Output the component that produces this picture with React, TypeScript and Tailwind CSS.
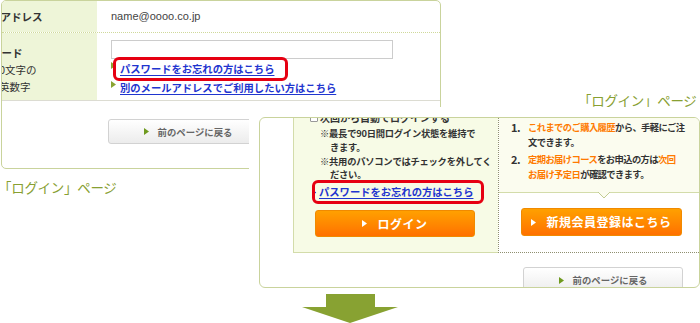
const jp = "font-['Noto_Sans_CJK_JP','Noto_Sans',sans-serif]";

function Tri({ className }: { className: string }) {
  return (
    <svg width="5" height="7" viewBox="0 0 5 7" className={className}>
      <path d="M0 0 L5 3.5 L0 7 Z" fill="currentColor" />
    </svg>
  );
}

function GrayButton({ className }: { className: string }) {
  return (
    <div
      className={`flex items-center justify-center gap-[9px] border border-[#d2d2d2] rounded-[3px] bg-gradient-to-b from-white to-[#ececec] ${className}`}
    >
      <Tri className="text-[#6f9a1f]" />
      <span className="text-[9.4px] leading-[12px] font-bold text-[#666]">前のページに戻る</span>
    </div>
  );
}

function OrangeButton({ label, className }: { label: string; className: string }) {
  return (
    <div
      className={`flex items-center justify-center gap-[10px] rounded-[3px] bg-gradient-to-b from-[#ffa000] to-[#ff7000] border border-[#f08a00] text-white ${className}`}
    >
      <Tri className="text-white" />
      <span className="text-[12px] leading-[16px] font-bold tracking-[0.5px]">{label}</span>
    </div>
  );
}

// link wrapped in the red annotation frame
function BoxedLink({ text, frame }: { text: string; frame: string }) {
  return (
    <span className="relative block text-[10.3px] leading-[14px] font-bold text-[#1f35cf] whitespace-nowrap">
      <span className="underline underline-offset-[2px]">{text}</span>
      <span className={`absolute border-[3px] border-[#e60012] rounded-[6px] ${frame}`} />
    </span>
  );
}

function OldLogin() {
  return (
    <div className="absolute left-[1px] top-0 w-[440px] h-[169px] border border-[#c9d39c] rounded-[5px] overflow-hidden bg-white text-[#333]">
      <div className="flex h-[32px] border-b border-dotted border-[#cfd99a]">
        <div className="w-[95px] bg-[#eef5d8] overflow-hidden flex items-center">
          <span className="ml-[-33px] text-[10.5px] leading-[14px] font-bold whitespace-nowrap">メールアドレス</span>
        </div>
        <div className="flex items-center pl-[14px] font-['Liberation_Sans',sans-serif] text-[11px] text-[#444]">
          name@oooo.co.jp
        </div>
      </div>
      <div className="flex h-[68px] border-b border-[#dcdcd2]">
        <div className="w-[95px] bg-[#eef5d8] overflow-hidden pt-[11px] text-[10.5px] leading-[17px] whitespace-nowrap">
          <div className="ml-[-32px] font-bold">パスワード</div>
          <div className="ml-[-25px]">4～20文字の</div>
          <div className="ml-[-24px]">半角英数字</div>
        </div>
        <div className="pl-[14px] pt-[7px]">
          <div className="w-[282px] h-[19px] border border-[#cccccc] bg-white" />
          <div className="flex items-center gap-[4px] mt-[3px] h-[14px]">
            <Tri className="text-[#8aa432] self-start" />
            <BoxedLink text="パスワードをお忘れの方はこちら" frame="-left-[7px] -top-[5px] -right-[14px] -bottom-[5px]" />
          </div>
          <div className="flex items-center gap-[4px] mt-[5px] h-[14px]">
            <Tri className="text-[#8aa432] self-start" />
            <span className="text-[10.3px] leading-[14px] font-bold text-[#1f35cf] underline underline-offset-[2px] whitespace-nowrap">
              別のメールアドレスでご利用したい方はこちら
            </span>
          </div>
        </div>
      </div>
      <div className="pl-[106px] pt-[18px]">
        <GrayButton className="w-[160px] h-[25px]" />
      </div>
    </div>
  );
}

function NewLogin() {
  return (
    <div className="absolute left-[249px] top-[107px] w-[451px] h-[185px] bg-white pl-[10px] pt-[10px]">
      <div className="w-[441px] h-[171px] border border-[#c9d39c] rounded-[6px] overflow-hidden bg-white text-[#333]">
        <div className="flex h-[135px]">
          <div className="w-[33px]" />
          <div className="w-[205px] bg-[#f7fbe6] border-l border-b border-[#d3dcaa] pl-[16px]">
            <div className="flex items-center gap-[2px] mt-[-7px] h-[14px]">
              <span className="w-[8px] h-[8px] border border-[#999] bg-white rounded-[1px]" />
              <span className="text-[10px] leading-[14px] font-bold whitespace-nowrap">次回から自動でログインする</span>
            </div>
            <div className="pl-[10px] mt-[2px] text-[9.3px] font-bold leading-[13.8px] whitespace-nowrap tracking-[-0.25px]">
              <div>※最長で90日間ログイン状態を維持で</div>
              <div className="pl-[10px]">きます。</div>
              <div>※共用のパソコンではチェックを外してく</div>
              <div className="pl-[10px]">ださい。</div>
            </div>
            <div className="flex items-center gap-[2px] mt-[3px] ml-[2px] h-[14px]">
              <Tri className="text-[#1f35cf] scale-75" />
              <BoxedLink text="パスワードをお忘れの方はこちら" frame="-left-[7px] -top-[5px] -right-[11px] -bottom-[5px]" />
            </div>
            <OrangeButton label="ログイン" className="ml-[5px] mt-[11px] w-[160px] h-[27px]" />
          </div>
          <div className="w-[201px] border-l border-b border-dotted border-[#8f8f70]">
            <div className="relative h-[75px] bg-[#fbfcef] border-b border-[#d3dcaa] pt-[2px]">
              <div className="pl-[12px] pr-[8px] text-[9.3px] font-bold leading-[14.5px] tracking-[-0.6px]">
                <div className="flex">
                  <span className="w-[17px] text-[11px] text-[#333]">1.</span>
                  <span>
                    <span className="text-[#ff7a00]">これまでのご購入履歴</span>から、手軽にご注
                    <br />
                    文できます。
                  </span>
                </div>
                <div className="flex mt-[3px]">
                  <span className="w-[17px] text-[11px] text-[#333]">2.</span>
                  <span>
                    <span className="text-[#ff7a00]">定期お届けコース</span>をお申込の方は
                    <span className="text-[#ff7a00]">次回</span>
                    <br />
                    <span className="text-[#ff7a00]">お届け予定日</span>が確認できます。
                  </span>
                </div>
              </div>
              <svg width="12" height="7" viewBox="0 0 12 7" className="absolute left-[99px] bottom-[-7px]">
                <path d="M0 0 L6 6 L12 0" fill="#fbfcef" stroke="#c2cc92" strokeWidth="1" />
              </svg>
            </div>
            <OrangeButton label="新規会員登録はこちら" className="ml-[22px] mt-[15px] w-[161px] h-[28px]" />
          </div>
        </div>
        <div className="pl-[263px] pt-[14px]">
          <GrayButton className="w-[160px] h-[26px]" />
        </div>
      </div>
    </div>
  );
}

export default function App() {
  return (
    <div className={`relative w-[700px] h-[323px] overflow-hidden bg-white ${jp}`}>
      <OldLogin />
      <div className="absolute left-[-2px] top-[177px] text-[13.5px] text-[#88a032] whitespace-nowrap tracking-[-0.3px]">
        「ログイン」ページ
      </div>
      <div className="absolute left-[578px] top-[90px] text-[13.5px] text-[#88a032] whitespace-nowrap tracking-[-0.3px]">
        「ログイン」ページ
      </div>
      <NewLogin />
      <svg width="96" height="30" viewBox="0 0 96 30" className="absolute left-[302px] top-[294px]">
        <path d="M24 0 H73 V13 H96 L48 29 L0 13 H24 Z" fill="#88a232" />
      </svg>
    </div>
  );
}
